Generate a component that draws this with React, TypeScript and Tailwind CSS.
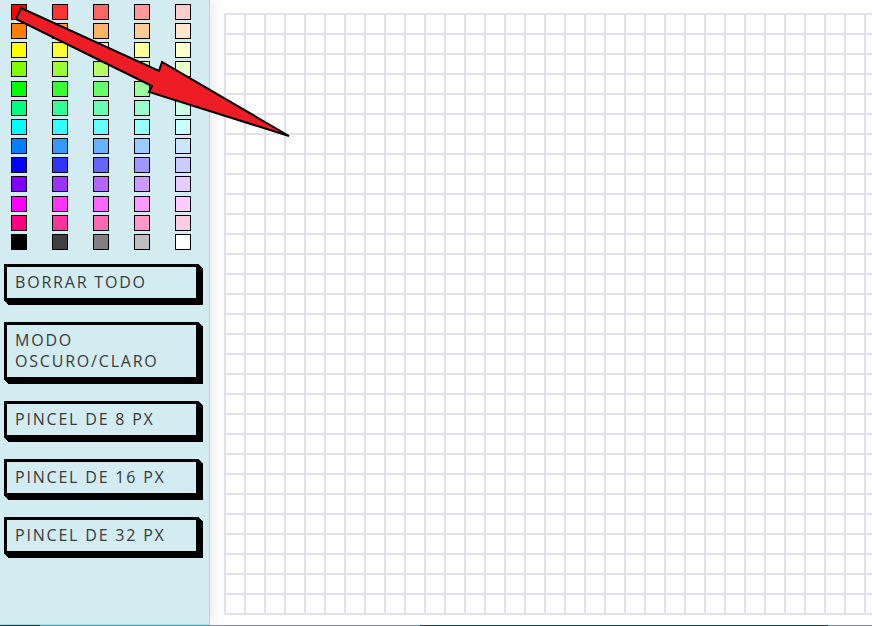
import React from "react";

const palette: string[][] = [
  ["#ff0000", "#ff3333", "#ff6666", "#ff9999", "#ffcccc"],
  ["#ff8000", "#ff9933", "#ffb366", "#ffcc99", "#ffe6cc"],
  ["#ffff00", "#ffff33", "#ffff66", "#ffff99", "#ffffcc"],
  ["#80ff00", "#99ff33", "#b3ff66", "#ccff99", "#e6ffcc"],
  ["#00ff00", "#33ff33", "#66ff66", "#99ff99", "#ccffcc"],
  ["#00ff80", "#33ff99", "#66ffb3", "#99ffcc", "#ccffe6"],
  ["#00ffff", "#33ffff", "#66ffff", "#99ffff", "#ccffff"],
  ["#0080ff", "#3399ff", "#66b3ff", "#99ccff", "#cce6ff"],
  ["#0000ff", "#3333ff", "#6666ff", "#9999ff", "#ccccff"],
  ["#8000ff", "#9933ff", "#b366ff", "#cc99ff", "#e6ccff"],
  ["#ff00ff", "#ff33ff", "#ff66ff", "#ff99ff", "#ffccff"],
  ["#ff0080", "#ff3399", "#ff66b3", "#ff99cc", "#ffcce6"],
  ["#000000", "#404040", "#808080", "#c0c0c0", "#ffffff"],
];

const buttons = [
  "BORRAR TODO",
  "MODO OSCURO/CLARO",
  "PINCEL DE 8 PX",
  "PINCEL DE 16 PX",
  "PINCEL DE 32 PX",
];

const ROWS = 30;
const COLS = 40;

function ToolButton({ label }: { label: string }) {
  return (
    <button
      className="w-[195px] text-left border-[3px] border-black bg-transparent pl-[8px] pr-[9px] pt-[5px] pb-[5px] text-[16px] leading-[21px] tracking-[1.8px] text-[#3a3a3a] shadow-[1px_1px_0_#000,2px_2px_0_#000,3px_3px_0_#000,4px_4px_0_#000]"
      style={{ fontFamily: '"Open Sans", sans-serif' }}
    >
      {label}
    </button>
  );
}

function Arrow() {
  return (
    <svg
      className="absolute left-0 top-0 z-20 pointer-events-none"
      width="300"
      height="150"
      viewBox="0 0 300 150"
    >
      <polygon
        points="21,8 159,71 162,62 289,136 149,92 152,86 16,19"
        fill="#ee1c24"
        stroke="#000"
        strokeWidth="2"
        strokeLinejoin="miter"
      />
    </svg>
  );
}

export default function App() {
  return (
    <div className="relative w-full overflow-hidden bg-white">
      <div className="flex">
        <aside className="relative z-10 w-[210px] h-[625px] shrink-0 bg-[#d3ecf2] border-r border-b border-[#a6d9e2] shadow-[4px_0_12px_rgba(0,0,0,0.08)]">
          <div className="pl-[11px] pt-[4px] grid grid-cols-[repeat(5,16px)] gap-x-[25px] gap-y-[3.17px]">
            {palette.flat().map((c, i) => (
              <div
                key={i}
                className="w-4 h-4 border border-black"
                style={{ backgroundColor: c }}
              />
            ))}
          </div>
          <div className="pl-[4px] pt-[14px] flex flex-col items-start gap-[21px]">
            {buttons.map((b) => (
              <ToolButton key={b} label={b} />
            ))}
          </div>
        </aside>
        <main className="flex-1 min-w-0 overflow-hidden pl-[14px] pt-[13px]">
          <div className="inline-block border-l-2 border-t-2 border-[#e2dfef]">
            {Array.from({ length: ROWS }).map((_, r) => (
              <div key={r} className="flex">
                {Array.from({ length: COLS }).map((_, c) => (
                  <div
                    key={c}
                    className="w-5 h-5 shrink-0 border-r-2 border-b-2 border-[#e2dfef] bg-white"
                  />
                ))}
              </div>
            ))}
          </div>
        </main>
      </div>
      <footer className="h-px bg-[linear-gradient(to_right,#1d3e43_0,#1d3e43_40px,#5f9fa9_40px,#5f9fa9_420px,#1e4646_420px,#1e4646_828px,#5f9fa9_828px)]" />
      <Arrow />
    </div>
  );
}
